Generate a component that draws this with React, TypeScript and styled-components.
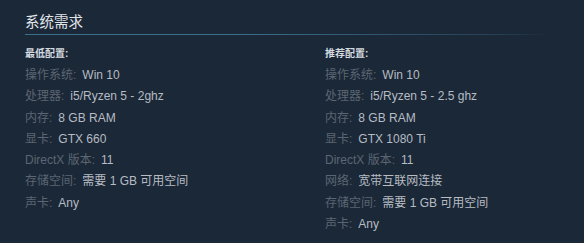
import styled, { createGlobalStyle } from 'styled-components'

interface Spec {
  label: string
  value: string
}

const minimum: Spec[] = [
  { label: '操作系统:', value: 'Win 10' },
  { label: '处理器:', value: 'i5/Ryzen 5 - 2ghz' },
  { label: '内存:', value: '8 GB RAM' },
  { label: '显卡:', value: 'GTX 660' },
  { label: 'DirectX 版本:', value: '11' },
  { label: '存储空间:', value: '需要 1 GB 可用空间' },
  { label: '声卡:', value: 'Any' },
]

const recommended: Spec[] = [
  { label: '操作系统:', value: 'Win 10' },
  { label: '处理器:', value: 'i5/Ryzen 5 - 2.5 ghz' },
  { label: '内存:', value: '8 GB RAM' },
  { label: '显卡:', value: 'GTX 1080 Ti' },
  { label: 'DirectX 版本:', value: '11' },
  { label: '网络:', value: '宽带互联网连接' },
  { label: '存储空间:', value: '需要 1 GB 可用空间' },
  { label: '声卡:', value: 'Any' },
]

function SpecColumn({ title, specs }: { title: string; specs: Spec[] }) {
  return (
    <Column>
      <ColumnTitle>{title}</ColumnTitle>
      <SpecList>
        {specs.map(spec => (
          <SpecRow key={spec.label}>
            <SpecLabel>{spec.label}</SpecLabel>
            {spec.value}
          </SpecRow>
        ))}
      </SpecList>
    </Column>
  )
}

export default function App() {
  return (
    <>
      <GlobalStyle />
      <Panel>
        <Heading>系统需求</Heading>
        <Rule />
        <Columns>
          <SpecColumn title="最低配置:" specs={minimum} />
          <SpecColumn title="推荐配置:" specs={recommended} />
        </Columns>
      </Panel>
    </>
  )
}

const GlobalStyle = createGlobalStyle`
  html, body {
    margin: 0;
    padding: 0;
    background: #1b2838;
  }
  body {
    font-family: Arial, "Liberation Sans", "Noto Sans CJK SC", sans-serif;
  }
`

const Panel = styled.div`
  width: 584px;
  height: 243px;
  box-sizing: border-box;
  padding: 14px 34px 0 25px;
  background: #1b2838;
  overflow: hidden;
`

const Heading = styled.h2`
  margin: 0;
  font-size: 14.5px;
  line-height: 16px;
  font-weight: normal;
  color: #e1e5e8;
  padding-bottom: 4px;
`

const Rule = styled.div`
  height: 1px;
  background: linear-gradient(to right, #3b6e8c 0%, #3b6e8c 40%, rgba(59, 110, 140, 0.35) 90%, rgba(59, 110, 140, 0) 100%);
  margin-bottom: 12px;
`

const Columns = styled.div`
  display: grid;
  grid-template-columns: 300px 1fr;
`

const Column = styled.div`
  display: flex;
  flex-direction: column;
`

const ColumnTitle = styled.div`
  font-size: 10px;
  line-height: 14px;
  font-weight: bold;
  color: #d6dbe0;
  margin-bottom: 4px;
`

const SpecList = styled.ul`
  list-style: none;
  margin: 0;
  padding: 0;
`

const SpecRow = styled.li`
  font-size: 12px;
  line-height: 21.3px;
  color: #b6bcc2;
  white-space: nowrap;
`

const SpecLabel = styled.span`
  color: #5b6672;
  margin-right: 6px;
`
